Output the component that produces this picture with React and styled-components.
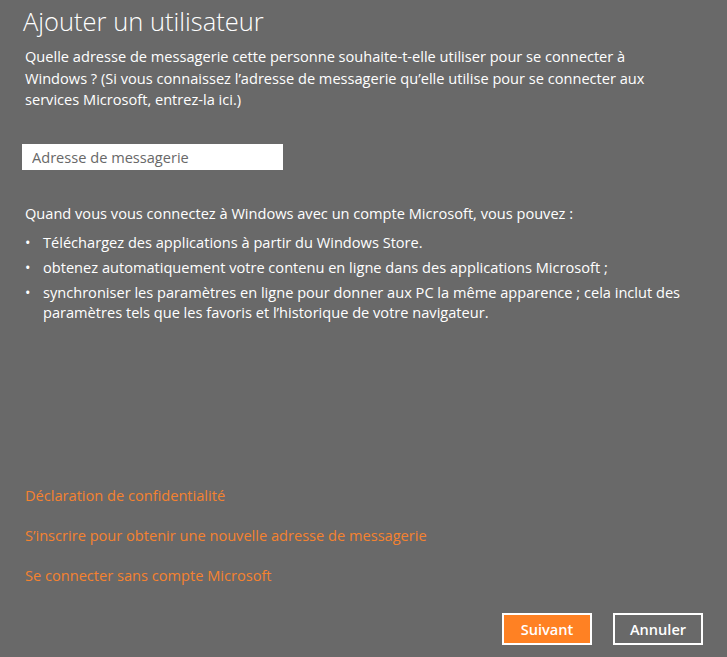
import React from "react";
import styled, { createGlobalStyle } from "styled-components";

const Global = createGlobalStyle`
  html, body { margin: 0; padding: 0; background: #696969; }
  body { font-family: "Open Sans", "Noto Sans", "Liberation Sans", sans-serif; color: #fff; }
  * { box-sizing: border-box; }
`;

const Page = styled.div`
  width: 727px;
  height: 657px;
  background: #696969;
  display: flex;
  flex-direction: column;
  padding: 0 25px 12px 25px;
  overflow: hidden;
`;

const Title = styled.h1`
  margin: 0;
  padding-top: 4px;
  margin-left: -2px;
  font-weight: 300;
  font-size: 25.5px;
  line-height: 34px;
  color: #fff;
`;

const Text = styled.p`
  margin: ${(p) => p.$mt || 0}px 0 0 0;
  font-size: 14.6px;
  line-height: 21.5px;
  color: #fff;
  max-width: 632px;
`;

const Field = styled.input`
  margin: 33px 0 0 -3px;
  width: 261px;
  height: 26px;
  border: none;
  outline: none;
  background: #fff;
  padding: 0 10px;
  font-family: inherit;
  font-size: 14.6px;
  color: #333;
  &::placeholder { color: #686868; }
`;

const List = styled.ul`
  margin: 3px 0 0 0;
  padding: 0;
  list-style: none;
`;

const Item = styled.li`
  position: relative;
  padding-left: 18px;
  font-size: 14.6px;
  line-height: 20px;
  margin-top: 5px;
  &::before {
    content: "•";
    position: absolute;
    left: 0;
    top: 0;
  }
`;

const Spacer = styled.div`
  flex: 1;
`;

const Links = styled.div`
  display: flex;
  flex-direction: column;
  gap: 19.5px;
`;

const Link = styled.a`
  color: #f5822f;
  font-size: 14.6px;
  line-height: 20.5px;
  text-decoration: none;
  cursor: pointer;
`;

const Footer = styled.div`
  display: flex;
  justify-content: flex-end;
  gap: 21px;
  margin-top: 28px;
  margin-right: -1px;
`;

const Button = styled.button`
  width: 90px;
  height: 32px;
  border: 2px solid #fff;
  background: ${(p) => (p.$primary ? "#ff8123" : "transparent")};
  color: #fff;
  font-family: inherit;
  font-weight: 600;
  font-size: 14.6px;
  padding: 0;
  cursor: pointer;
`;

export default function App() {
  return (
    <>
      <Global />
      <Page>
        <Title>Ajouter un utilisateur</Title>
        <Text $mt={8}>
          Quelle adresse de messagerie cette personne souhaite-t-elle utiliser pour se connecter à
          Windows ? (Si vous connaissez l’adresse de messagerie qu’elle utilise pour se connecter aux
          services Microsoft, entrez-la ici.)
        </Text>
        <Field placeholder="Adresse de messagerie" />
        <Text $mt={33}>
          Quand vous vous connectez à Windows avec un compte Microsoft, vous pouvez :
        </Text>
        <List>
          <Item>Téléchargez des applications à partir du Windows Store.</Item>
          <Item>obtenez automatiquement votre contenu en ligne dans des applications Microsoft ;</Item>
          <Item>
            synchroniser les paramètres en ligne pour donner aux PC la même apparence ; cela inclut des
            paramètres tels que les favoris et l’historique de votre navigateur.
          </Item>
        </List>
        <Spacer />
        <Links>
          <Link>Déclaration de confidentialité</Link>
          <Link>S’inscrire pour obtenir une nouvelle adresse de messagerie</Link>
          <Link>Se connecter sans compte Microsoft</Link>
        </Links>
        <Footer>
          <Button $primary>Suivant</Button>
          <Button>Annuler</Button>
        </Footer>
      </Page>
    </>
  );
}
